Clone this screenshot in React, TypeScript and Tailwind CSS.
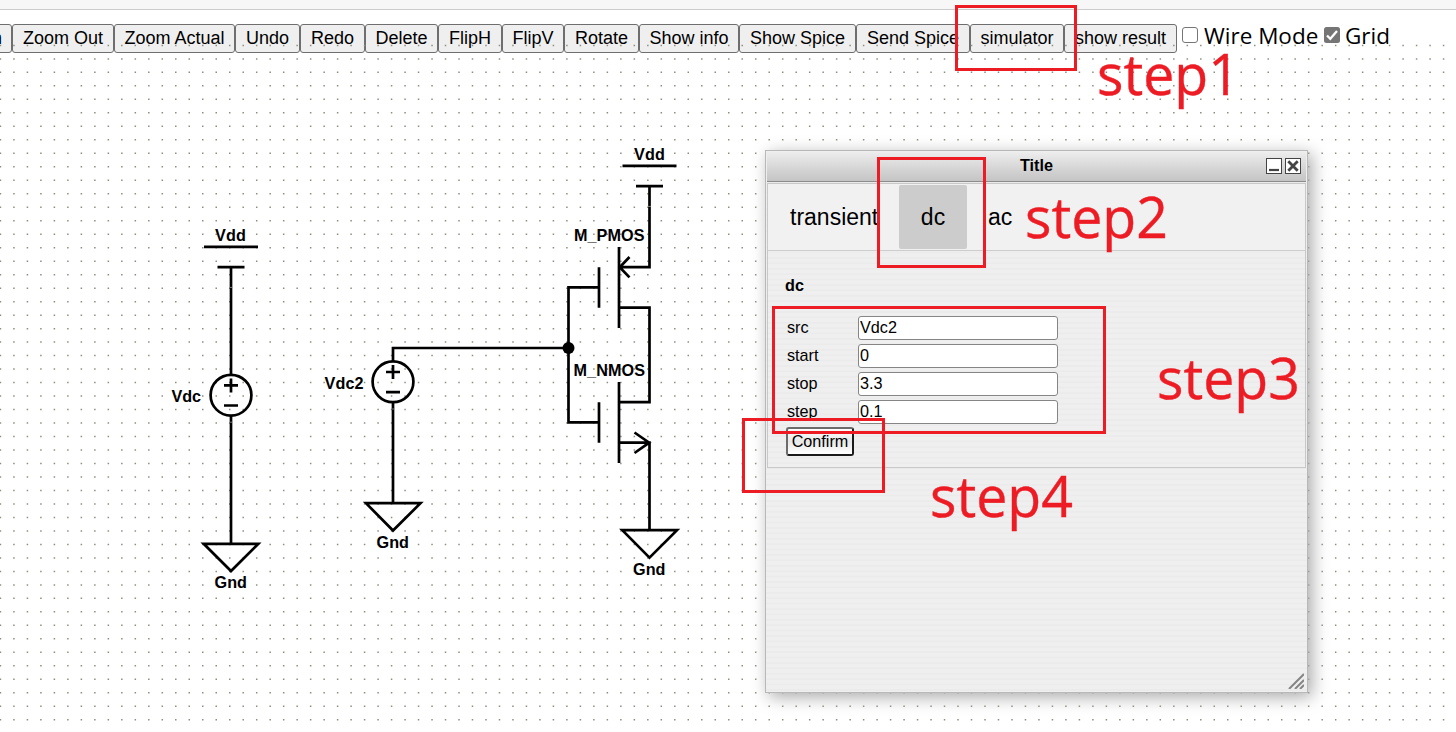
import React from "react";

const toolbar: { label: string; width: string }[] = [
  { label: "Zoom In", width: "w-[90px] pl-[4px]" },
  { label: "Zoom Out", width: "w-[102px]" },
  { label: "Zoom Actual", width: "w-[121px]" },
  { label: "Undo", width: "w-[65px]" },
  { label: "Redo", width: "w-[65px]" },
  { label: "Delete", width: "w-[73px]" },
  { label: "FlipH", width: "w-[64px]" },
  { label: "FlipV", width: "w-[62px]" },
  { label: "Rotate", width: "w-[75px]" },
  { label: "Show info", width: "w-[100px]" },
  { label: "Show Spice", width: "w-[117px]" },
  { label: "Send Spice", width: "w-[114px]" },
  { label: "simulator", width: "w-[94px]" },
  { label: "show result", width: "w-[113px]" },
];

const fields = [
  { name: "src", value: "Vdc2" },
  { name: "start", value: "0" },
  { name: "stop", value: "3.3" },
  { name: "step", value: "0.1" },
];

const PITCH = 13.487;

function GridDots() {
  const rows = Array.from({ length: 51 }, (_, i) => 45.4 + i * PITCH);
  return (
    <svg className="pointer-events-none absolute inset-0" width="1456" height="732">
      {rows.map((y) => (
        <line key={y} x1="-0.3" x2="1446" y1={y} y2={y} stroke="#8e8e80" strokeWidth="1.5" strokeDasharray="1.5 11.987" />
      ))}
    </svg>
  );
}

function Label({ x, y, w, children }: { x: number; y: number; w: number; children: string }) {
  return (
    <text x={x} y={y} textLength={w} fontSize="16.2" fontWeight="bold" fontFamily="Liberation Sans, sans-serif" fill="#000" stroke="none">
      {children}
    </text>
  );
}

function Source({ x, y }: { x: number; y: number }) {
  return (
    <g>
      <circle cx={x} cy={y} r="20.4" />
      <path d={`M${x - 7} ${y - 9.8}h14M${x} ${y - 16.8}v14M${x - 7} ${y + 10.3}h14`} />
    </g>
  );
}

function Schematic() {
  return (
    <svg className="pointer-events-none absolute inset-0" width="1456" height="732" fill="none" stroke="#000" strokeWidth="2.7">
      <path d="M204 246.8h54M217.5 267.2h27M231 267.2V374.5M231 415.5V543.8" />
      <path d="M203.7 543.8H258.3L231 571Z" />
      <Source x={231} y={395.2} />
      <path d="M393 361.5V348H568.5M393 402.2V503.2" />
      <path d="M366 503.2H420.5L393 530.5Z" />
      <Source x={393} y={381.8} />
      <path d="M622.5 165.8h54M636 186.1h27M649.5 186.1V267.2H619.5M629.5 257L619.7 267.2L629.5 277.4" />
      <path d="M619 247V328M599 267.2V307.7M599 287.3H568.5V422.3H599M599 402.2V442.7M619 307.7H649.5V402.2H619M619 382V463" />
      <path d="M619 442.7H649.5V530.2M634.5 432.5L649.2 442.7L634.5 453" />
      <path d="M622.3 530.2H677L649.5 557.7Z" />
      <circle cx="568.5" cy="348" r="6" fill="#000" stroke="none" />
      <path d="M229.5 287.4h3M229.5 422.2h3M391.5 409h3M648 206.4h3" stroke="#999" strokeWidth="0.8" />
      <Label x={215} y={241} w={31}>Vdd</Label>
      <Label x={171.5} y={402} w={29.5}>Vdc</Label>
      <Label x={214.5} y={588} w={32.5}>Gnd</Label>
      <Label x={324.5} y={389} w={39}>Vdc2</Label>
      <Label x={376.5} y={548} w={32.5}>Gnd</Label>
      <Label x={634} y={160} w={31}>Vdd</Label>
      <Label x={574} y={241} w={70.5}>M_PMOS</Label>
      <Label x={573.5} y={376} w={71.5}>M_NMOS</Label>
      <Label x={633} y={575} w={32.5}>Gnd</Label>
    </svg>
  );
}

function TitleIcons() {
  return (
    <span className="absolute right-[5px] top-[6px] flex gap-[3px]">
      <svg width="16" height="16" fill="#fff" stroke="#444">
        <rect x=".5" y=".5" width="15" height="15" />
        <path d="M3 12h10" strokeWidth="2.2" />
      </svg>
      <svg width="16" height="16" fill="#fff" stroke="#444">
        <rect x=".5" y=".5" width="15" height="15" />
        <path d="M3.3 3.3l9.4 9.4M12.7 3.3l-9.4 9.4" strokeWidth="2.8" />
      </svg>
    </span>
  );
}

function SimulationWindow() {
  return (
    <section className="absolute left-[765px] top-[150px] flex h-[543px] w-[543px] flex-col border border-[#b8b8b8] bg-[repeating-linear-gradient(180deg,#efefef_0px,#efefef_3px,#ebebeb_4px,#ebebeb_5px,#efefef_5.4px)] p-px text-[16.2px] text-black shadow-[4px_4px_16px_#aaaaaa]">
      <header className="relative h-[30px] shrink-0 border-b border-[#8c8c8c] bg-linear-to-b from-[#ededed] to-[#c4c4c4] text-center font-bold leading-[27px]">
        Title
        <TitleIcons />
      </header>
      <div className="mt-px border border-[#c8c8c8]">
        <nav className="flex h-[67px] items-start border-b border-[#ccc] bg-[#f1f1f1] pt-px text-[23px] leading-[64px]">
          <button className="h-16 w-[131px] pl-[22px] text-left">transient</button>
          <button className="h-16 w-[68px] rounded-[2px] bg-[#ccc] text-center">dc</button>
          <button className="h-16 pl-[21px]">ac</button>
        </nav>
        <div className="h-[216px] pl-[17px] pt-[24px]">
          <h3 className="h-[41px] font-bold leading-[20px]">dc</h3>
          <div className="flex flex-col gap-1 pl-[3px]">
            {fields.map((f) => (
              <label key={f.name} className="flex h-6 items-start">
                <span className="-ml-px w-[71px] leading-[22px]">{f.name}</span>
                <input
                  readOnly
                  value={f.value}
                  className="h-6 w-[200px] rounded-[3px] border border-[#858585] bg-white pb-px pl-px text-[16.2px] text-black"
                />
              </label>
            ))}
          </div>
          <button className="ml-px mt-[3px] h-[29px] w-[68px] rounded-[3px] border-2 border-b-[#1a1a1a] border-l-[#6b6b6b] border-r-[#1a1a1a] border-t-[#6b6b6b] bg-linear-to-b from-white via-[#e8e8e8] to-white pb-[2px] leading-[22px]">
            Confirm
          </button>
        </div>
      </div>
      <svg className="absolute bottom-[3px] right-[3px]" width="16" height="16" stroke="#858585" strokeWidth="2">
        <path d="M1 16L16 1M7 16L16 7M12 16L16 12" />
      </svg>
    </section>
  );
}

function Annotations() {
  const text =
    "absolute origin-left scale-x-[0.99] whitespace-nowrap font-['Open_Sans'] text-[56px] leading-[60px] text-[#ed1c24] [-webkit-text-stroke:0.4px_#ed1c24]";
  return (
    <div className="pointer-events-none absolute inset-0">
      <div className="absolute left-[955px] top-[5px] h-[66px] w-[122px] border-3 border-[#ed1c24]" />
      <div className="absolute left-[877px] top-[157px] h-[111px] w-[109px] border-3 border-[#ed1c24]" />
      <div className="absolute left-[772px] top-[306px] h-[128px] w-[334px] border-3 border-[#ed1c24]" />
      <div className="absolute left-[742px] top-[418px] h-[75px] w-[143px] border-3 border-[#ed1c24]" />
      <span className={`${text} left-[1097px] top-[43px]`}>step1</span>
      <span className={`${text} left-[1025px] top-[186px]`}>step2</span>
      <span className={`${text} left-[1157px] top-[347px]`}>step3</span>
      <span className={`${text} left-[930px] top-[465px]`}>step4</span>
    </div>
  );
}

export default function App() {
  return (
    <main className="relative h-[732px] w-[1456px] overflow-hidden bg-white font-['Liberation_Sans',Arial,sans-serif] text-black">
      <div className="h-[10px] border-b border-[#ccc] bg-[#f7f7f7]" />
      <div className="-ml-[78px] flex pt-[14px]">
        {toolbar.map((b) => (
          <button
            key={b.label}
            className={`${b.width} h-[29px] shrink-0 whitespace-nowrap rounded-[3px] border border-[#6e6e6e] bg-[#efefef] text-center text-[18px] leading-[27px]`}
          >
            {b.label}
          </button>
        ))}
        <label className="ml-[5px] flex shrink-0 font-['Open_Sans'] text-[22.5px] leading-[24px]">
          <span className="mt-[3px] h-4 w-4 rounded-[3px] border border-[#767676] bg-white" />
          <span className="ml-[6px] w-[120px] whitespace-nowrap">Wire Mode</span>
        </label>
        <label className="flex shrink-0 font-['Open_Sans'] text-[22.5px] leading-[24px]">
          <svg className="mt-[3px]" width="16" height="16">
            <rect width="16" height="16" rx="2.5" fill="#757575" />
            <path d="M3 8.5l3.3 3.3L13 4" fill="none" stroke="#fff" strokeWidth="2.3" />
          </svg>
          <span className="ml-[5px]">Grid</span>
        </label>
      </div>
      <GridDots />
      <Schematic />
      <SimulationWindow />
      <Annotations />
    </main>
  );
}
